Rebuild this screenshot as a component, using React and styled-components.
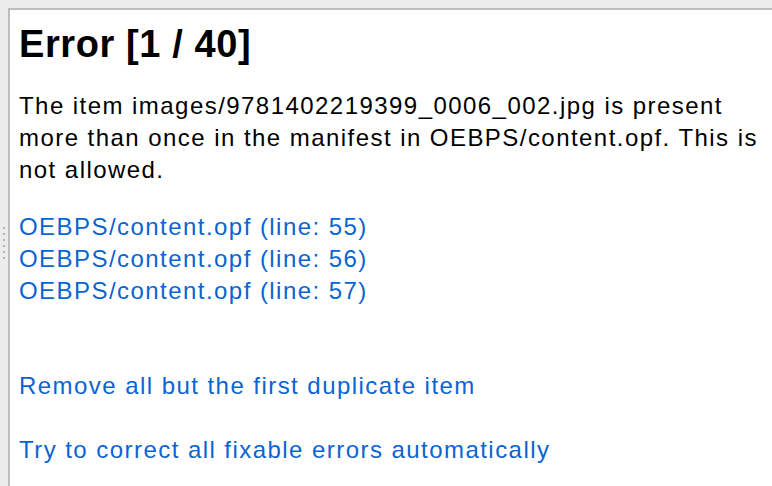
import React from 'react';
import styled, { createGlobalStyle } from 'styled-components';

const GlobalStyle = createGlobalStyle`
  html, body {
    margin: 0;
    padding: 0;
    height: 100%;
    overflow: hidden;
  }
  #root {
    height: 100%;
  }
`;

const Window = styled.div`
  display: flex;
  height: 100vh;
  padding-top: 8px;
  box-sizing: border-box;
  background: #ececec;
`;

const Splitter = styled.div`
  width: 8px;
  display: flex;
  flex-direction: column;
  align-items: center;
  justify-content: center;
  gap: 4px;
  padding-bottom: 8px;
  span {
    width: 2px;
    height: 2px;
    background: #b4b4b4;
  }
`;

const Panel = styled.div`
  flex: 1;
  min-width: 0;
  background: #fff;
  border-top: 2px solid #bdbdbd;
  border-left: 2px solid #bdbdbd;
  padding: 12px 0 0 9px;
  font-family: 'Liberation Sans', Arial, sans-serif;
  font-size: 24px;
  line-height: 32px;
  letter-spacing: 1.45px;
  color: #000;
`;

const Title = styled.h1`
  margin: 0 0 24px;
  font-family: 'Liberation Sans', Arial, sans-serif;
  font-weight: 700;
  font-size: 38px;
  line-height: 44px;
  letter-spacing: 0.6px;
`;

const Message = styled.p`
  margin: 0 0 25px;
`;

const LinkList = styled.div`
  display: flex;
  flex-direction: column;
  margin-bottom: ${({ $gap }) => $gap || 0}px;
`;

const LinkItem = styled.a`
  color: #0a64d2;
  text-decoration: none;
  cursor: pointer;
`;

const locations = [55, 56, 57];

const App = () => {
  return (
    <>
      <GlobalStyle />
      <Window>
        <Splitter>
          {[0, 1, 2, 3, 4, 5].map((i) => (
            <span key={i} />
          ))}
        </Splitter>
        <Panel>
          <Title>Error [1 / 40]</Title>
          <Message>
            The item images/9781402219399_0006_002.jpg is present more than once in the manifest in
            OEBPS/content.opf. This is not allowed.
          </Message>
          <LinkList $gap={63}>
            {locations.map((line) => (
              <LinkItem key={line}>OEBPS/content.opf (line: {line})</LinkItem>
            ))}
          </LinkList>
          <LinkList $gap={32}>
            <LinkItem>Remove all but the first duplicate item</LinkItem>
          </LinkList>
          <LinkList>
            <LinkItem>Try to correct all fixable errors automatically</LinkItem>
          </LinkList>
        </Panel>
      </Window>
    </>
  );
};

export default App;
